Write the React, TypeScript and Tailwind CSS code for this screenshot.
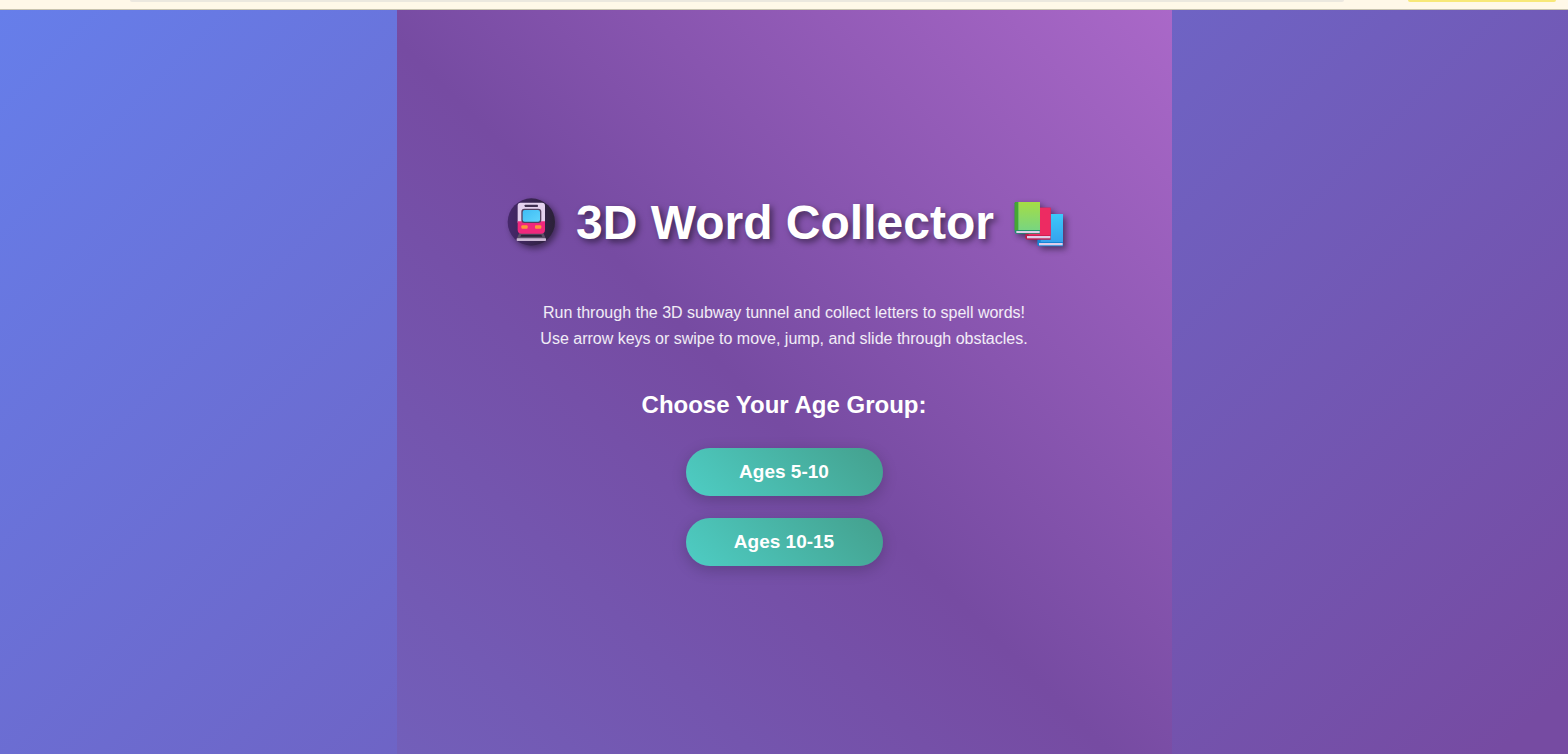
function MetroIcon() {
    return (
        <svg viewBox="52 39 144 144" className="h-12 w-12 shrink-0 overflow-visible drop-shadow-[3px_3px_3px_rgba(0,0,0,0.45)]" aria-hidden="true">
            <defs>
                <linearGradient id="tunnel" x1="0" y1="0" x2="1" y2="0">
                    <stop offset="0" stopColor="#46286b" />
                    <stop offset="1" stopColor="#2b2138" />
                </linearGradient>
                <linearGradient id="windscreen" x1="0" y1="0" x2="1" y2="1">
                    <stop offset="0" stopColor="#3fbdf5" />
                    <stop offset="1" stopColor="#5fd3fb" />
                </linearGradient>
            </defs>
            <circle cx="122" cy="108" r="71" fill="url(#tunnel)" />
            {/* Track */}
            <path d="M86 140h72l8 20H78z" fill="#5b5068" />
            <path d="M92 146h60l3 6H89z" fill="#2b2138" />
            <rect x="78" y="157" width="88" height="8" rx="2" fill="#cdb9d6" />
            {/* Carriage */}
            <path d="M90 50h64q9 0 9 9v51H81V59q0-9 9-9z" fill="#e4d2ee" />
            <path d="M81 106h82v25q0 12-12 12H93q-12 0-12-12z" fill="#f0287d" />
            <rect x="102" y="56" width="40" height="7" rx="2" fill="#3f3050" />
            <rect x="92" y="68" width="60" height="43" rx="9" fill="#54405f" />
            <rect x="96" y="72" width="52" height="35" rx="6" fill="url(#windscreen)" />
            <rect x="92" y="118" width="19" height="10" rx="3" fill="#ff9838" />
            <rect x="133" y="118" width="19" height="10" rx="3" fill="#ff9838" />
        </svg>
    );
}

function BooksIcon() {
    return (
        <svg viewBox="40 39 150 144" className="h-12 w-[50px] shrink-0 overflow-visible drop-shadow-[3px_3px_3px_rgba(0,0,0,0.45)]" aria-hidden="true">
            <defs>
                <linearGradient id="bookGreen" x1="0" y1="0" x2="0" y2="1">
                    <stop offset="0" stopColor="#a5dd45" />
                    <stop offset="1" stopColor="#78d580" />
                </linearGradient>
                <linearGradient id="bookBlue" x1="0" y1="0" x2="0" y2="1">
                    <stop offset="0" stopColor="#3bc9fa" />
                    <stop offset="1" stopColor="#35a2ee" />
                </linearGradient>
            </defs>
            <path d="M112 84h75v97h-71q-6 0-6-6z" fill="#1685d5" />
            <path d="M120 84h67v84h-67z" fill="url(#bookBlue)" />
            <path d="M115 171h71v7h-71z" fill="#dfcdea" />
            <path d="M76 65h74v96H82q-8 0-8-8z" fill="#bd1b4b" />
            <path d="M84 65h66v83H84z" fill="#ed2b62" />
            <path d="M79 150h70v7H79z" fill="#dfcdea" />
            <path d="M46 48h72v95H48q-6 0-6-6V52q0-4 4-4z" fill="#209471" />
            <path d="M46 48h7v85H42V52q0-4 4-4z" fill="#45a633" />
            <path d="M53 48h65v84H53z" fill="url(#bookGreen)" />
            <path d="M47 135h70v6H47z" fill="#dfcdea" />
        </svg>
    );
}

const ageGroups = ["Ages 5-10", "Ages 10-15"];

export default function App() {
    return (
        <div className="flex min-h-screen flex-col font-['Liberation_Sans',Arial,sans-serif] text-white">
            <div className="flex h-[10px] shrink-0 items-start border-b border-[#c8c3ae] bg-[#fff8e8] pl-[130px] pr-3">
                <div className="h-[2px] flex-1 rounded-b-lg bg-[#ece8df]"></div>
                <div className="ml-16 h-[2px] w-[148px] rounded-b-lg bg-[#f8e878]"></div>
            </div>

            <div className="flex flex-1 justify-center bg-[linear-gradient(135deg,#667eea_0%,#764ba2_97%)]">
                <main className="flex w-full max-w-[775px] flex-col items-center justify-center bg-[linear-gradient(45deg,#725fba_0%,#764ba2_47%,#aa68c8_100%)] text-center">
                    <h1 className="flex items-center gap-5 pl-1 text-5xl leading-[50px] font-bold">
                        <MetroIcon />
                        <span className="[text-shadow:3px_3px_6px_rgba(0,0,0,0.5)]">3D Word Collector</span>
                        <BooksIcon />
                    </h1>

                    <p className="mt-[52px] text-base leading-[26px] text-white/90">
                        Run through the 3D subway tunnel and collect letters to spell words!
                        <br />
                        Use arrow keys or swipe to move, jump, and slide through obstacles.
                    </p>

                    <h2 className="mt-[37px] text-2xl leading-8 font-bold">Choose Your Age Group:</h2>

                    <div className="mt-[27px] flex flex-col gap-[22px]">
                        {ageGroups.map((label) => (
                            <button
                                key={label}
                                type="button"
                                className="h-12 w-[197px] cursor-pointer rounded-full bg-[linear-gradient(45deg,#4ecdc4,#44a08d)] text-[19px] font-bold shadow-[0_4px_15px_rgba(0,0,0,0.2)]"
                            >
                                {label}
                            </button>
                        ))}
                    </div>
                </main>
            </div>
        </div>
    );
}
